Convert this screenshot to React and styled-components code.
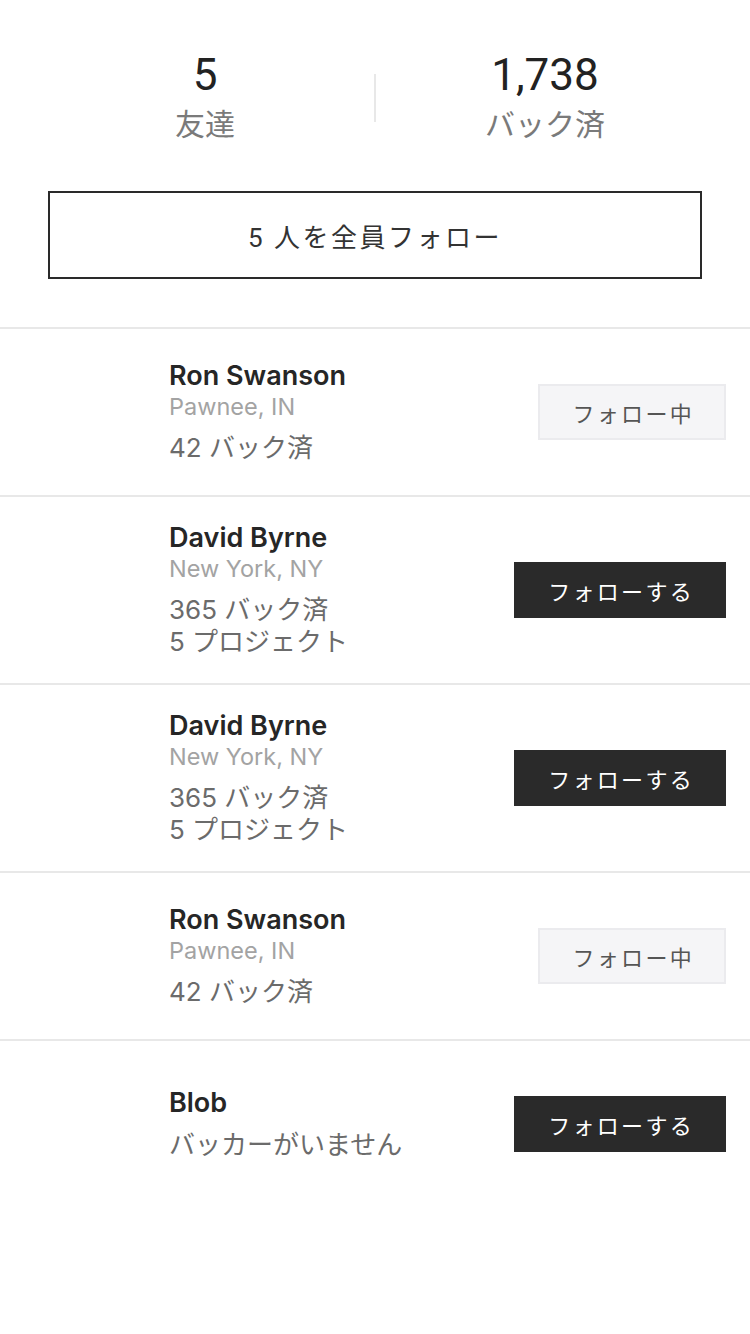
import React from "react";
import styled, { createGlobalStyle } from "styled-components";

const GlobalStyle = createGlobalStyle`
  html, body { margin: 0; padding: 0; background: #ffffff; }
  body {
    font-family: Roboto, "Noto Sans CJK JP", sans-serif;
    -webkit-font-smoothing: antialiased;
  }
  * { box-sizing: border-box; }
`;

const Page = styled.div`
  width: 750px;
  min-height: 1334px;
  background: #fff;
`;

const Header = styled.section`
  display: flex;
  flex-direction: column;
  align-items: center;
  padding: 50px 0 48px;
`;

const StatsRow = styled.div`
  display: flex;
  align-items: center;
  width: 100%;
  padding: 0 36px;
`;

const Stat = styled.div`
  flex: 1;
  display: flex;
  flex-direction: column;
  align-items: center;
`;

const StatNumber = styled.div`
  font-size: 44px;
  line-height: 50px;
  font-weight: 400;
  color: #222;
`;

const StatLabel = styled.div`
  margin-top: 5px;
  font-size: 30px;
  line-height: 40px;
  color: #7a7a7a;
`;

const VDivider = styled.div`
  width: 2px;
  height: 48px;
  background: #e8e8e8;
`;

const FollowAllButton = styled.button`
  margin-top: 46px;
  width: 654px;
  height: 88px;
  border: 2px solid #2a2a2a;
  background: #fff;
  color: #333;
  font-family: Roboto, "Noto Sans CJK JP", sans-serif;
  font-size: 26px;
  letter-spacing: 2.5px;
  padding: 0;
  cursor: pointer;
`;

const List = styled.div`
  display: flex;
  flex-direction: column;
`;

const Row = styled.div`
  display: flex;
  align-items: center;
  border-top: 2px solid #e8e8e8;
  padding: 25px 24px 25px 24px;
`;

const Avatar = styled.div`
  flex: none;
  width: 116px;
  height: 116px;
  background: transparent;
`;

const Info = styled.div`
  flex: 1;
  display: flex;
  flex-direction: column;
  margin-left: 29px;
  font-family: Inter, "Noto Sans CJK JP", sans-serif;
`;

const Name = styled.div`
  font-size: 27px;
  line-height: 32px;
  font-weight: 600;
  color: #262626;
`;

const Location = styled.div`
  font-size: 23.5px;
  line-height: 30px;
  color: #a3a3a3;
`;

const Stats = styled.div`
  margin-top: 10px;
  display: flex;
  flex-direction: column;
`;

const StatLine = styled.div`
  font-size: 26px;
  line-height: 32px;
  color: #6b6b6b;
`;

const FollowButton = styled.button`
  flex: none;
  height: 56px;
  padding: 0 30px 0 32px;
  font-family: Roboto, "Noto Sans CJK JP", sans-serif;
  font-size: 22px;
  letter-spacing: 2.3px;
  cursor: pointer;
  border: 2px solid ${(p) => (p.$following ? "#ebebee" : "#2a2a2a")};
  background: ${(p) => (p.$following ? "#f5f5f7" : "#2a2a2a")};
  color: ${(p) => (p.$following ? "#555" : "#fff")};
`;

const people = [
  { name: "Ron Swanson", location: "Pawnee, IN", stats: ["42 バック済"], following: true },
  { name: "David Byrne", location: "New York, NY", stats: ["365 バック済", "5 プロジェクト"], following: false },
  { name: "David Byrne", location: "New York, NY", stats: ["365 バック済", "5 プロジェクト"], following: false },
  { name: "Ron Swanson", location: "Pawnee, IN", stats: ["42 バック済"], following: true },
  { name: "Blob", location: null, stats: ["バッカーがいません"], following: false },
];

export default function App() {
  return (
    <Page>
      <GlobalStyle />
      <Header>
        <StatsRow>
          <Stat>
            <StatNumber>5</StatNumber>
            <StatLabel>友達</StatLabel>
          </Stat>
          <VDivider />
          <Stat>
            <StatNumber>1,738</StatNumber>
            <StatLabel>バック済</StatLabel>
          </Stat>
        </StatsRow>
        <FollowAllButton>5 人を全員フォロー</FollowAllButton>
      </Header>
      <List>
        {people.map((p, i) => (
          <Row key={i}>
            <Avatar />
            <Info>
              <Name>{p.name}</Name>
              {p.location && <Location>{p.location}</Location>}
              <Stats>
                {p.stats.map((s, j) => (
                  <StatLine key={j}>{s}</StatLine>
                ))}
              </Stats>
            </Info>
            <FollowButton $following={p.following}>
              {p.following ? "フォロー中" : "フォローする"}
            </FollowButton>
          </Row>
        ))}
      </List>
    </Page>
  );
}
